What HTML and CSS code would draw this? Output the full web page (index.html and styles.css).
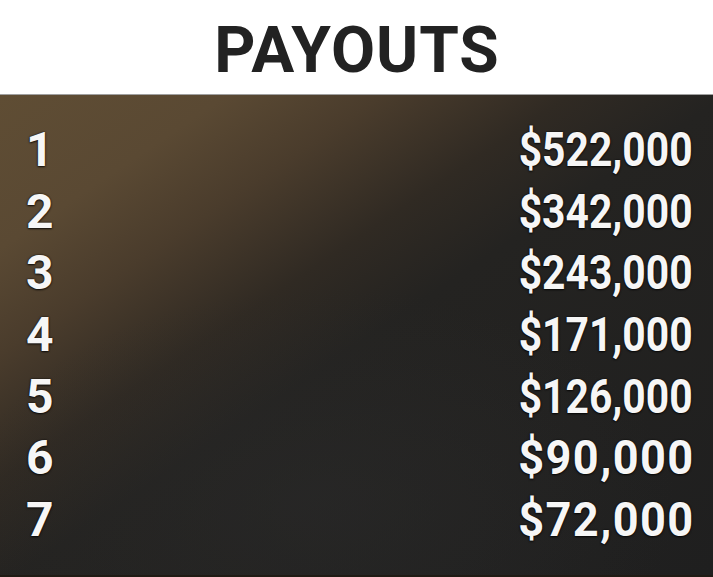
FILE: index.html
```html
<!DOCTYPE html>
<html>
<head>
<meta charset="utf-8">
<link rel="stylesheet" href="styles.css">
</head>
<body>
<div class="card">
  <header class="head"><h1 class="title">PAYOUTS</h1></header>
  <section class="board">
    <div class="row"><span class="place">1</span><span class="amount">$522,000</span></div>
    <div class="row"><span class="place">2</span><span class="amount">$342,000</span></div>
    <div class="row"><span class="place">3</span><span class="amount">$243,000</span></div>
    <div class="row"><span class="place">4</span><span class="amount">$171,000</span></div>
    <div class="row"><span class="place">5</span><span class="amount">$126,000</span></div>
    <div class="row"><span class="place">6</span><span class="amount short">$90,000</span></div>
    <div class="row"><span class="place">7</span><span class="amount short">$72,000</span></div>
  </section>
</div>
</body>
</html>
```
FILE: styles.css
```css
html, body {
  margin: 0;
  padding: 0;
  background: #1c1c1c;
}
.card {
  width: 713px;
  height: 577px;
  display: flex;
  flex-direction: column;
  overflow: hidden;
  font-family: Roboto, "Liberation Sans", sans-serif;
}
.head {
  height: 95px;
  box-sizing: border-box;
  background: #ffffff;
  border-bottom: 1px solid #a0a0a0;
  display: flex;
  justify-content: center;
  padding-top: 7px;
}
.title {
  margin: 0;
  font-size: 64px;
  line-height: 88px;
  font-weight: 700;
  color: #222222;
  letter-spacing: 1px;
  padding-left: 1px;
}
.board {
  flex: 1;
  box-sizing: border-box;
  padding: 24px 20px 0 26px;
  border-bottom: 2px solid #201b14;
  background:
    radial-gradient(ellipse 50% 45% at 45% 85%, rgba(44, 44, 44, 0.45) 0%, rgba(40, 40, 40, 0) 100%),
    linear-gradient(146deg, #5f4d34 0%, #5a4933 16%, #4a3c2c 27%, #302a23 40%, #242321 51%, #1f1f1f 100%);
}
.row {
  display: flex;
  justify-content: space-between;
  align-items: baseline;
  height: 61.7px;
  line-height: 61.7px;
  font-size: 48px;
  font-weight: 700;
  color: #f6f6f6;
  text-shadow: 0 0 2px rgba(0,0,0,0.9), 0 1px 2px rgba(0,0,0,0.7);
}
.amount {
  display: inline-block;
  transform: scaleX(0.85);
  transform-origin: right center;
}
.amount.short {
  transform: scaleX(0.94);
  letter-spacing: 1.5px;
  margin-right: -1.5px;
}
```
